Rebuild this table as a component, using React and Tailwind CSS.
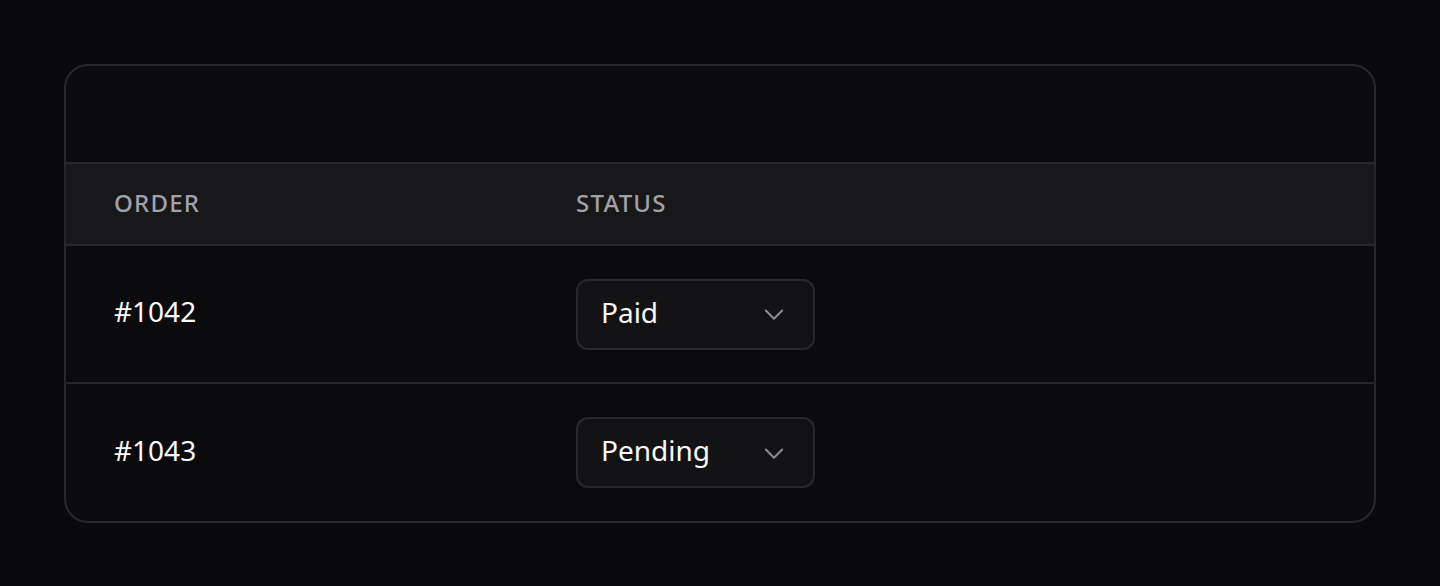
import React from "react";

function Chevron() {
  return (
    <svg width="28" height="28" viewBox="0 0 24 24" fill="none" stroke="#8b8b92" strokeWidth="1.75" strokeLinecap="round" strokeLinejoin="round">
      <path d="M5 9l7 7 7-7" />
    </svg>
  );
}

function Select({ value }) {
  return (
    <div className="flex h-[71px] w-[239px] items-center justify-between rounded-[12px] border-2 border-[#29292d] bg-[#131316] pl-[23px] pr-[25px]">
      <span className="pb-[5px] text-[28px] text-[#fafafa]">{value}</span>
      <Chevron />
    </div>
  );
}

const rows = [
  { id: "#1042", status: "Paid" },
  { id: "#1043", status: "Pending" },
];

export default function App() {
  return (
    <div className="min-h-[586px] bg-[#0a0a0c] px-[64px] pt-[64px]" style={{ fontFamily: '"Noto Sans", "Open Sans", sans-serif' }}>
      <div className="overflow-hidden rounded-[24px] border-2 border-[#28282c] bg-[#0b0b0d]">
        <div className="h-[96px]" />
        <div className="grid h-[84px] grid-cols-[461px_1fr] items-center border-y-2 border-[#27272a] bg-[#18181b]">
          <div className="pl-[48px] pb-[3px] text-[24px] font-medium tracking-[0.05em] text-[#a1a1aa]">ORDER</div>
          <div className="pl-[49px] pb-[3px] text-[24px] font-medium tracking-[0.05em] text-[#a1a1aa]">STATUS</div>
        </div>
        {rows.map((r, i) => (
          <div key={r.id} className={`grid grid-cols-[461px_1fr] items-center ${i > 0 ? "h-[139px] border-t-2 border-[#27272a]" : "h-[136px]"}`}>
            <div className="pl-[48px] pb-[6px] text-[28px] text-[#fafafa]">{r.id}</div>
            <div className="pl-[49px]">
              <Select value={r.status} />
            </div>
          </div>
        ))}
      </div>
    </div>
  );
}
